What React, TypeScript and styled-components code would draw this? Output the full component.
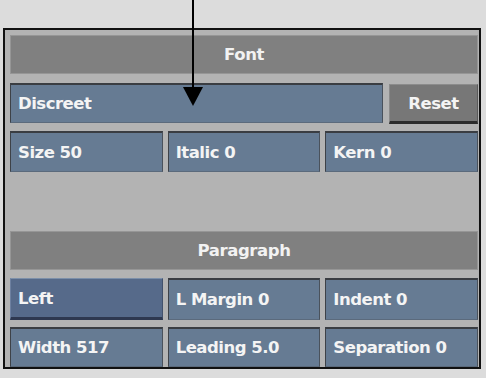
import styled, { createGlobalStyle } from "styled-components";

const Global = createGlobalStyle`
  html, body {
    margin: 0;
    padding: 0;
    background: #dcdcdc;
  }
`

const Page = styled.div`
  position: relative;
  width: 486px;
  height: 378px;
  padding: 28px 0 0 3px;
  box-sizing: border-box;
  font-family: "DejaVu Sans", "Liberation Sans", sans-serif;
  font-weight: bold;
`

const Panel = styled.div`
  box-sizing: border-box;
  width: 478px;
  height: 341px;
  background: #b3b3b3;
  border: 2px solid #111;
  padding: 5px 1px 0 5px;
  display: flex;
  flex-direction: column;
`

const Header = styled.div`
  box-sizing: border-box;
  height: 39px;
  background: #808080;
  border: 1px solid #969696;
  color: #f2f2f2;
  font-size: 16.5px;
  letter-spacing: -0.4px;
  display: flex;
  align-items: center;
  justify-content: center;
`

interface RowProps {
  $cols: string
  $top: number
  $h: number
}

const Row = styled.div<RowProps>`
  display: grid;
  grid-template-columns: ${p => p.$cols};
  column-gap: 5px;
  margin-top: ${p => p.$top}px;
  height: ${p => p.$h}px;
`

const Field = styled.div`
  box-sizing: border-box;
  background: #667b93;
  border-top: 2px solid #3a3d42;
  border-left: 1px solid #3e4248;
  border-right: 1px solid #4a525c;
  border-bottom: 1px solid #5b6a7c;
  color: #f4f4f4;
  font-size: 16.5px;
  letter-spacing: -0.5px;
  padding-left: 7px;
  display: flex;
  align-items: center;
`

const Selected = styled(Field)`
  background: #566a8a;
  border-top: 1px solid #7c8fa9;
  border-left: 1px solid #6d80a0;
  border-right: 1px solid #43526c;
  border-bottom: 3px solid #2e3850;
`

const Button = styled.div`
  box-sizing: border-box;
  margin: 1px 0 -1px 1px;
  background: #777777;
  border-top: 1px solid #8c8c8c;
  border-left: 1px solid #8a8a8a;
  border-right: 1px solid #5a5a5a;
  border-bottom: 3px solid #2c2c2c;
  color: #f4f4f4;
  font-size: 16.5px;
  letter-spacing: -0.5px;
  display: flex;
  align-items: center;
  justify-content: center;
`

const Arrow = styled.svg`
  position: absolute;
  left: 182px;
  top: 0;
`

const App = () => {
  return (
    <>
      <Global />
      <Page>
        <Panel>
          <Header>Font</Header>
          <Row $cols="1fr 90px" $top={9} $h={40}>
            <Field>Discreet</Field>
            <Button>Reset</Button>
          </Row>
          <Row $cols="1fr 1fr 1fr" $top={8} $h={41}>
            <Field>Size 50</Field>
            <Field>Italic 0</Field>
            <Field>Kern 0</Field>
          </Row>
          <Row $cols="1fr" $top={0} $h={59} />
          <Header>Paragraph</Header>
          <Row $cols="1fr 1fr 1fr" $top={8} $h={42}>
            <Selected>Left</Selected>
            <Field>L Margin 0</Field>
            <Field>Indent 0</Field>
          </Row>
          <Row $cols="1fr 1fr 1fr" $top={7} $h={40}>
            <Field>Width 517</Field>
            <Field>Leading 5.0</Field>
            <Field>Separation 0</Field>
          </Row>
        </Panel>
        <Arrow width="22" height="108" viewBox="0 0 22 108">
          <line x1="11" y1="0" x2="11" y2="92" stroke="#000" strokeWidth="2" />
          <polygon points="1,87 21,87 11,106" fill="#000" />
        </Arrow>
      </Page>
    </>
  )
}

export default App
